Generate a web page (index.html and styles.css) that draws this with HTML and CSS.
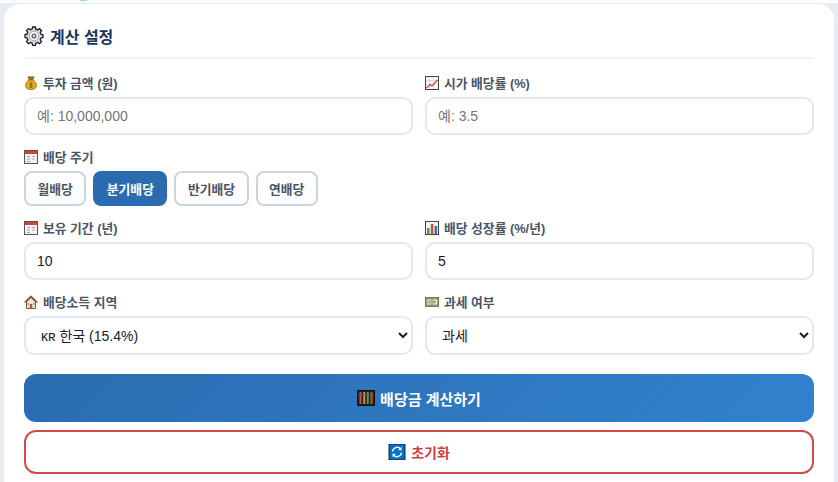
FILE: index.html
```html
<!DOCTYPE html>
<html lang="ko">
<head>
    <meta charset="UTF-8">
    <title>배당금 계산기</title>
    <link rel="stylesheet" href="styles.css">
</head>
<body>
<div class="strip"><span></span></div>
<div class="card">
    <h2 class="title">
        <svg class="ico-title" viewBox="0 0 20 20">
            <path d="M8.600 1h2.800l.5 2.200 1.700.7 1.900-1.200 2 2-1.200 1.900.7 1.700 2 .5v2.800l-2 .5-.7 1.700 1.200 1.900-2 2-1.900-1.200-1.700.7-.5 2.200H8.600l-.5-2.200-1.700-.7-1.900 1.200-2-2 1.200-1.900-.7-1.700-2-.5V8.600l2-.5.7-1.700-1.200-1.900 2-2 1.900 1.200 1.700-.7z" fill="#d5d7db" stroke="#1d1f24" stroke-width="1.300"/>
            <circle cx="10" cy="10" r="4.800" fill="#f4f4f5" stroke="#9a9ea5" stroke-width=".8"/>
            <circle cx="10" cy="10" r="2.600" fill="#6f737b"/>
            <circle cx="10" cy="10" r="1" fill="#e8e8ea"/>
        </svg>
        계산 설정
    </h2>

    <div class="row">
        <div class="field">
            <label>
                <svg class="ico" viewBox="0 0 14 14">
                    <path d="M3.800.8h6.400L8.800 4H5.200z" fill="#a8741a" stroke="#5e4310" stroke-width=".5"/>
                    <path d="M5 4h4c2.500 1.600 3.500 3.800 3.500 5.500C12.500 12 10.500 13.500 7 13.500S1.500 12 1.500 9.500C1.500 7.800 2.500 5.600 5 4z" fill="#e8a91c" stroke="#8a5a10" stroke-width=".7"/>
                    <path d="M7 6.500v5M8.400 7.600C7.600 7 5.800 7.100 5.800 8.200s2.600 1 2.600 2.200-1.900 1.200-2.800.6" fill="none" stroke="#3c6e20" stroke-width=".9"/>
                </svg>
                투자 금액 (원)
            </label>
            <input type="text" placeholder="예: 10,000,000">
        </div>
        <div class="field">
            <label>
                <svg class="ico" viewBox="0 0 14 14">
                    <rect x=".5" y=".5" width="13" height="13" fill="#f6f6f6" stroke="#444"/>
                    <path d="M1 4.500h12M1 8.500h12M4.500 1v12M8.500 1v12" stroke="#cfcfcf" stroke-width=".6"/>
                    <path d="M1.500 12L5 8.500l2 1.500 5.500-6" fill="none" stroke="#d9482f" stroke-width="1.300"/>
                </svg>
                시가 배당률 (%)
            </label>
            <input type="text" placeholder="예: 3.5">
        </div>
    </div>

    <div class="field">
        <label>
            <svg class="ico" viewBox="0 0 14 14">
                <rect x=".5" y=".5" width="13" height="13" fill="#f2f2f2" stroke="#555"/>
                <rect x="1" y="1" width="12" height="3" fill="#c8473a"/>
                <path d="M3 6.500h3M8 6.500h3M3 9h3M8 9h3M3 11.500h3" stroke="#b9a0a0" stroke-width="1"/>
            </svg>
            배당 주기
        </label>
        <div class="periods">
            <button class="period">월배당</button>
            <button class="period cur">분기배당</button>
            <button class="period">반기배당</button>
            <button class="period">연배당</button>
        </div>
    </div>

    <div class="row">
        <div class="field">
            <label>
                <svg class="ico" viewBox="0 0 14 14">
                    <rect x=".5" y=".5" width="13" height="13" fill="#f2f2f2" stroke="#555"/>
                    <rect x="1" y="1" width="12" height="3" fill="#c8473a"/>
                    <path d="M3 6.500h3M8 6.500h3M3 9h3M8 9h3M3 11.500h3" stroke="#b9a0a0" stroke-width="1"/>
                </svg>
                보유 기간 (년)
            </label>
            <input type="text" value="10">
        </div>
        <div class="field">
            <label>
                <svg class="ico" viewBox="0 0 14 14">
                    <rect x=".5" y=".5" width="13" height="13" fill="#f6f6f6" stroke="#444"/>
                    <rect x="2" y="7" width="2.500" height="6" fill="#3fa34d"/>
                    <rect x="5.800" y="3" width="2.500" height="10" fill="#d9482f"/>
                    <rect x="9.600" y="5" width="2.500" height="8" fill="#2f6fc9"/>
                </svg>
                배당 성장률 (%/년)
            </label>
            <input type="text" value="5">
        </div>
    </div>

    <div class="row">
        <div class="field">
            <label>
                <svg class="ico" viewBox="0 0 14 14">
                    <path d="M7 .8L.6 7h1.900v6.500h9V7h1.900z" fill="#efe3cf" stroke="#4a3a2a" stroke-width=".8"/>
                    <path d="M7 .8L.6 7h2.200L7 3l4.200 4h2.200z" fill="#8a4a38"/>
                    <rect x="5.800" y="9" width="2.400" height="4.500" fill="#c8503a"/>
                    <rect x="3.200" y="8" width="1.800" height="1.800" fill="#6fb1dd"/>
                    <rect x="9" y="8" width="1.800" height="1.800" fill="#6fb1dd"/>
                </svg>
                배당소득 지역
            </label>
            <select>
                <option>ᴋʀ 한국 (15.4%)</option>
            </select>
        </div>
        <div class="field">
            <label>
                <svg class="ico" viewBox="0 0 14 14">
                    <rect x=".3" y="2.500" width="13.400" height="9" fill="#8d9a5a" stroke="#444" stroke-width=".6"/>
                    <rect x="1.800" y="4.500" width="4.500" height="5" fill="#e8ecd0"/>
                    <rect x="7.700" y="4.500" width="4.500" height="5" fill="#e8ecd0"/>
                    <path d="M3 5.500v3M5 5.500v3M9 5.500v3M11 7h-2" stroke="#55603a" stroke-width=".8"/>
                </svg>
                과세 여부
            </label>
            <select>
                <option>과세</option>
            </select>
        </div>
    </div>

    <button class="btn-calc">
        <svg class="ico-btn" viewBox="0 0 18 16">
            <rect x=".5" y=".5" width="17" height="15" fill="#1f1f24" stroke="#111"/>
            <path d="M3.500 2v12" stroke="#c8503a" stroke-width="2"/>
            <path d="M7.200 2v12" stroke="#d98a2e" stroke-width="2"/>
            <path d="M10.800 2v12" stroke="#46a35a" stroke-width="2"/>
            <path d="M14.500 2v12" stroke="#c8503a" stroke-width="2"/>
            <path d="M1 5h16" stroke="#6b5a48" stroke-width="1"/>
        </svg>
        배당금 계산하기
    </button>
    <button class="btn-reset">
        <svg class="ico-btn" viewBox="0 0 16 16">
            <rect width="16" height="16" fill="#0b6fc4" stroke="#0a2a4a"/>
            <path d="M3.500 7.500A4.600 4.600 0 0 1 11.600 5M12.500 8.500A4.600 4.600 0 0 1 4.400 11" fill="none" stroke="#fff" stroke-width="1.400"/>
            <path d="M12.500 2.800v3.400H9.200zM3.500 13.200V9.800h3.300z" fill="#fff"/>
        </svg>
        초기화
    </button>
</div>
</body>
</html>
```

FILE: styles.css
```css
*{
    box-sizing: border-box;
}
body{
    margin: 0;
    height: 482px;
    overflow: hidden;
    padding: 0 4px;
    background-color: #e8edf3;
    font-family: "Liberation Sans", "Noto Sans CJK KR", sans-serif;
}
.strip{
    height: 4px;
    margin: 0 -4px;
    background-color: #fbfcfd;
    border-bottom: 1px solid #e8edf3;
}
.strip span{
    display: block;
    width: 7px;
    height: 1px;
    margin-left: 80px;
    background-color: #9fdcd6;
}
.card{
    background-color: #fff;
    border-radius: 16px 16px 0 0;
    padding: 20px;
    height: 500px;
}
.title{
    display: flex;
    align-items: center;
    gap: 6px;
    margin: 0 0 15px;
    padding-bottom: 10px;
    height: 35px;
    border-bottom: 2px solid #f0f4f8;
    font-size: 16px;
    font-weight: 700;
    color: #1a365d;
}
.ico-title{
    width: 20px;
    height: 20px;
}
.row{
    display: grid;
    grid-template-columns: 1fr 1fr;
    gap: 12px;
}
.field{
    margin-bottom: 13px;
}
label{
    display: flex;
    align-items: center;
    gap: 5px;
    height: 17px;
    margin-bottom: 6px;
    font-size: 12.800px;
    font-weight: 600;
    color: #4a5568;
}
.ico{
    width: 14px;
    height: 14px;
}
input,select{
    display: block;
    width: 100%;
    height: 38px;
    padding: 0 11px;
    border: 2px solid #e2e8f0;
    border-radius: 10px;
    background-color: #fff;
    font-family: inherit;
    font-size: 14px;
    color: #1a202c;
    outline: none;
}
select{
    height: 39px;
}
input::placeholder{
    color: #757575;
}
.periods{
    display: flex;
    gap: 7px;
}
.period{
    height: 35px;
    padding: 0 11.500px;
    border: 2px solid #cbd5e0;
    border-radius: 8px;
    background-color: #fff;
    font-family: inherit;
    font-size: 12.800px;
    font-weight: 600;
    color: #4a5568;
}
.period.cur{
    border-color: #2b6cb0;
    background-color: #2b6cb0;
    color: #fff;
}
.btn-calc,.btn-reset{
    display: flex;
    align-items: center;
    justify-content: center;
    gap: 5px;
    width: 100%;
    border-radius: 12px;
    font-family: inherit;
    font-weight: 700;
}
.btn-calc{
    height: 48px;
    margin-top: 6px;
    border: 0;
    background: linear-gradient(135deg, #2b6cb0, #3182ce);
    font-size: 15px;
    color: #fff;
}
.btn-reset{
    height: 44px;
    margin-top: 8px;
    border: 2px solid #d14b4b;
    background-color: #fff;
    font-size: 14px;
    color: #cf4040;
}
.ico-btn{
    width: 18px;
    height: 16px;
}
```
